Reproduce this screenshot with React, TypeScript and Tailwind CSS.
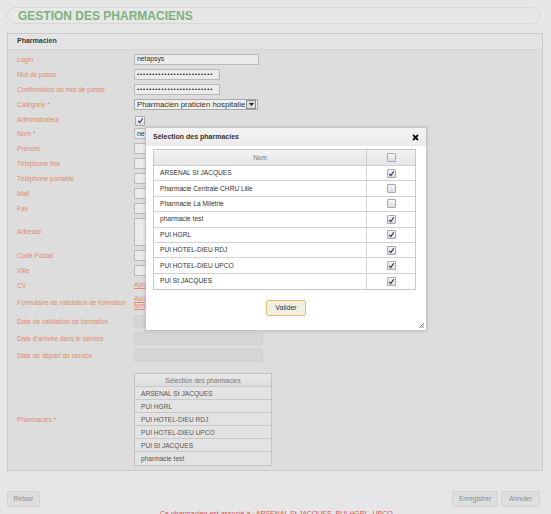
import React from "react";

function Cb({ checked, big }: { checked?: boolean; big?: boolean }) {
  return (
    <span
      className={`inline-flex items-center justify-center border border-[#a4aab2] rounded-[1px] bg-gradient-to-b from-[#f6f6f6] to-[#dcdee1] ${
        big ? "w-[10px] h-[10px]" : "w-[9px] h-[9px]"
      }`}
    >
      {checked && (
        <svg width="7" height="7" viewBox="0 0 7 7">
          <path d="M1.2 3.8 L2.8 5.6 L5.8 1.2" fill="none" stroke="#2a3550" strokeWidth="1.1" />
        </svg>
      )}
    </span>
  );
}

function Row({ label, h = "h-[14.9px]", children }: { label: string; h?: string; children?: React.ReactNode }) {
  return (
    <div className={`flex items-center ${h}`}>
      <div className="w-[126px] pl-[9px] pt-[1px] text-[6.6px] leading-[8px] text-[#de8b6e]">{label}</div>
      <div className="flex items-center">{children}</div>
    </div>
  );
}

const Box = ({ children, w = "w-[125px]" }: { children?: React.ReactNode; w?: string }) => (
  <div className={`${w} h-[11px] border border-[#b9b9b9] bg-[#ebebeb] flex items-center pl-[2px] text-[6.8px] text-[#333] overflow-hidden`}>
    {children}
  </div>
);

const DateBox = () => <div className="w-[129px] h-[13px] rounded-[2px] border border-[#d0d0d0] bg-[#d5d5d5]" />;

const modalRows: [string, boolean][] = [
  ["ARSENAL St JACQUES", true],
  ["Pharmacie Centrale CHRU Lille", false],
  ["Pharmacie La Milétrie", false],
  ["pharmacie test", true],
  ["PUI HGRL", true],
  ["PUI HOTEL-DIEU RDJ", true],
  ["PUI HOTEL-DIEU UPCO", true],
  ["PUI St JACQUES", true],
];

const selRows = ["ARSENAL St JACQUES", "PUI HGRL", "PUI HOTEL-DIEU RDJ", "PUI HOTEL-DIEU UPCO", "PUI St JACQUES", "pharmacie test"];

export default function App() {
  const dots = "•••••••••••••••••••••••••";
  return (
    <div className="relative w-[551px] h-[514px] overflow-hidden bg-[#e6e6e6] font-['Liberation_Sans',Arial,sans-serif]">
      <div className="pl-[7px] pt-[7px]">
        {/* Title bar */}
        <div className="w-[533px] h-[17px] rounded-[8px] border border-[#d7d7d7] bg-[#e7e7e7] flex items-center pl-[10px]">
          <span className="text-[12px] font-bold text-[#7cb27f] leading-none">GESTION DES PHARMACIENS</span>
        </div>

        {/* Panel */}
        <div className="mt-[9px] w-[536px] h-[438px] border border-[#cbcbcb] bg-[#dddddd]">
          <div className="h-[16px] bg-[#e4e4e4] border-b border-[#d6d6d6] flex items-center pl-[9px]">
            <span className="text-[7px] font-bold text-[#3a3a3a]">Pharmacien</span>
          </div>
          <div className="pt-[2px]">
            <Row label="Login">
              <Box>netapsys</Box>
            </Row>
            <Row label="Mot de passe">
              <Box w="w-[86px]">
                <span className="tracking-[0.95px] text-[6px] text-[#111]">{dots}</span>
              </Box>
            </Row>
            <Row label="Confirmation du mot de passe">
              <Box w="w-[86px]">
                <span className="tracking-[0.95px] text-[6px] text-[#111]">{dots}</span>
              </Box>
            </Row>
            <Row label="Catégorie *">
              <div className="w-[124px] h-[11px] border border-[#a9a9a9] bg-[#efefef] flex items-center justify-between">
                <span className="pl-[2px] text-[7.8px] leading-[9px] text-[#333] whitespace-nowrap overflow-hidden w-[110px]">Pharmacien praticien hospitalier</span>
                <span className="w-[10px] h-[9px] mr-[1px] border border-[#8f8f8f] bg-[#dcdcdc] flex items-center justify-center">
                  <svg width="5" height="3" viewBox="0 0 5 3">
                    <path d="M0 0 H5 L2.5 3 Z" fill="#222" />
                  </svg>
                </span>
              </div>
            </Row>
            <Row label="Administrateur">
              <span className="ml-[1px]">
                <Cb checked big />
              </span>
            </Row>
            <Row label="Nom *">
              <Box>ne</Box>
            </Row>
            <Row label="Prénom">
              <Box />
            </Row>
            <Row label="Téléphone fixe">
              <Box />
            </Row>
            <Row label="Téléphone portable">
              <Box />
            </Row>
            <Row label="Mail">
              <Box />
            </Row>
            <Row label="Fax">
              <Box />
            </Row>
            <Row label="Adresse" h="h-[32px]">
              <div className="w-[125px] h-[28px] border border-[#b9b9b9] bg-[#ebebeb]" />
            </Row>
            <Row label="Code Postal">
              <Box />
            </Row>
            <Row label="Ville">
              <Box />
            </Row>
            <Row label="CV">
              <span className="text-[6.6px] text-[#de8b6e] underline">Ajouter</span>
            </Row>
            <Row label="Formulaire de validation de formation" h="h-[20px]">
              <span className="text-[6.6px] leading-[7.5px] text-[#de8b6e] underline w-[44px]">Ajouter un formulaire</span>
            </Row>
            <Row label="Date de validation de formation" h="h-[18px]">
              <DateBox />
            </Row>
            <Row label="Date d'arrivée dans le service" h="h-[17px]">
              <DateBox />
            </Row>
            <Row label="Date de départ du service" h="h-[17px]">
              <DateBox />
            </Row>
            <div className="flex items-center mt-[9px]">
              <div className="w-[126px] pl-[9px] text-[6.6px] text-[#de8b6e]">Pharmacies *</div>
              <div className="w-[138px] border border-[#c3c3c3] bg-[#e3e3e3]">
                <div className="h-[13px] bg-gradient-to-b from-[#e9e9e9] to-[#dcdcdc] border-b border-[#c8c8c8] flex items-center justify-center text-[6.6px] text-[#7a7a7a]">
                  Sélection des pharmacies
                </div>
                {selRows.map((r, i) => (
                  <div
                    key={r}
                    className={`h-[13px] flex items-center pl-[6px] text-[6.6px] text-[#555] ${i < selRows.length - 1 ? "border-b border-[#c8c8c8]" : ""}`}
                  >
                    {r}
                  </div>
                ))}
              </div>
            </div>
          </div>
        </div>

        {/* Buttons */}
        <div className="mt-[20px] w-[533px] flex items-center justify-between">
          <div className="w-[33px] h-[16px] border border-[#d2d2d2] bg-[#dedede] rounded-[2px] flex items-center justify-center text-[6.6px] text-[#8a8a8a]">
            Retour
          </div>
          <div className="flex gap-[3px]">
            <div className="w-[46px] h-[16px] border border-[#d2d2d2] bg-[#dedede] rounded-[2px] flex items-center justify-center text-[6.6px] text-[#8a8a8a]">
              Enregistrer
            </div>
            <div className="w-[39px] h-[16px] border border-[#d2d2d2] bg-[#dedede] rounded-[2px] flex items-center justify-center text-[6.6px] text-[#8a8a8a]">
              Annuler
            </div>
          </div>
        </div>
        <div className="mt-[2px] pl-[153px] text-[7px] text-[#d85050] whitespace-nowrap">
          Ce pharmacien est associé à : ARSENAL St JACQUES, PUI HGRL, UPCO
        </div>
      </div>

      {/* Modal */}
      <div className="absolute left-[145px] top-[127px] w-[282px] h-[204px] bg-white border border-[#c4c4c4] shadow-[0_0_3px_rgba(0,0,0,0.15)]">
        <div className="h-[18px] bg-gradient-to-b from-[#f3f3f3] to-[#ebebeb] flex items-center justify-between pl-[7px] pr-[7px]">
          <span className="text-[7px] font-bold text-[#333]">Sélection des pharmacies</span>
          <svg width="7" height="7" viewBox="0 0 7 7">
            <path d="M1 1 L6 6 M6 1 L1 6" stroke="#111" strokeWidth="1.8" />
          </svg>
        </div>
        <div className="ml-[7px] mt-[3px] w-[263px] border border-[#c8c8c8]">
          <div className="flex h-[16px] bg-gradient-to-b from-[#f2f2f2] to-[#e6e6e6] border-b border-[#cfcfcf]">
            <div className="w-[213px] border-r border-[#cfcfcf] flex items-center justify-center text-[6.4px] text-[#777]">Nom</div>
            <div className="flex-1 flex items-center justify-center">
              <Cb />
            </div>
          </div>
          {modalRows.map(([name, c], i) => (
            <div key={name} className={`flex h-[15.4px] ${i < modalRows.length - 1 ? "border-b border-[#d2d2d2]" : ""}`}>
              <div className="w-[213px] border-r border-[#d2d2d2] flex items-center pl-[6px] text-[6.6px] text-[#333]">{name}</div>
              <div className="flex-1 flex items-center justify-center">
                <Cb checked={c} />
              </div>
            </div>
          ))}
        </div>
        <div className="mt-[10px] flex justify-center">
          <div className="w-[40px] h-[16px] rounded-[2px] border border-[#e2c264] bg-[#f2f0e4] flex items-center justify-center text-[7px] text-[#333]">
            Valider
          </div>
        </div>
        <svg className="absolute right-[2px] bottom-[2px]" width="6" height="6" viewBox="0 0 6 6">
          <path d="M6 1 L1 6 M6 3 L3 6 M6 5 L5 6" stroke="#777" strokeWidth="0.8" />
        </svg>
      </div>
    </div>
  );
}
